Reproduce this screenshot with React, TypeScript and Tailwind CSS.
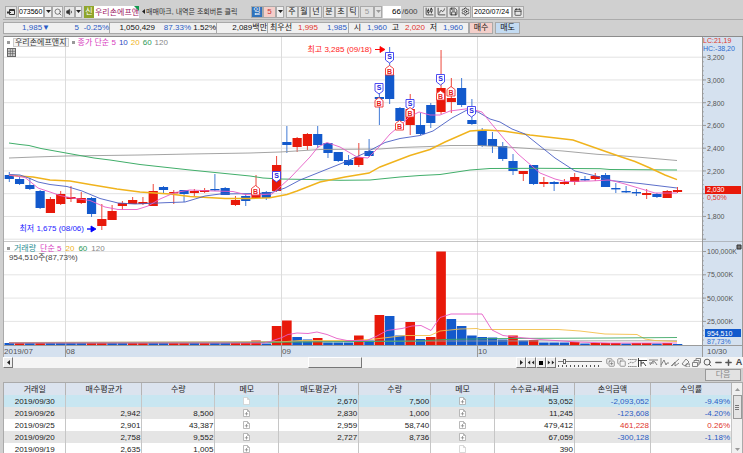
import React from 'react';
import {
  Calendar,
  ChartCandlestick,
  ChartSpline,
  Copy,
  CopyPlus,
  Minus,
  Plus,
  Save,
  Search,
  Settings,
  Volume1,
} from 'lucide-react';
import clsx from 'clsx';

const RED = '#e8190a';
const BLUE = '#1259cc';

// colour, high, body top, body bottom, low (chart units)
type Candle = [string, number, number, number, number];

const candles: Candle[] = [
  ['b', 172, 175, 179, 182],
  ['b', 177, 179, 184, 185],
  ['b', 178, 185, 189, 190],
  ['b', 190, 191, 208, 209],
  ['r', 197, 199, 213, 213],
  ['r', 191, 194, 204, 205],
  ['r', 186, 197, 199, 202],
  ['r', 192, 198, 203, 204],
  ['b', 197, 198, 214, 217],
  ['r', 204, 219, 226, 230],
  ['r', 205, 211, 220, 220],
  ['r', 201, 203, 206, 210],
  ['r', 197, 200, 204, 204],
  ['r', 197, 202, 204, 205],
  ['r', 184, 191, 206, 206],
  ['b', 186, 187, 190, 194],
  ['r', 190, 192, 193, 204],
  ['b', 190, 190, 194, 202],
  ['r', 189, 191, 193, 196],
  ['r', 188, 190, 192, 193],
  ['b', 174, 189, 190, 191],
  ['b', 187, 188, 195, 195],
  ['r', 196, 200, 205, 206],
  ['b', 194, 196, 201, 206],
  ['r', 175, 193, 198, 198],
  ['b', 191, 192, 198, 200],
  ['r', 156, 165, 191, 192],
  ['b', 126, 142, 145, 153],
  ['r', 137, 138, 147, 152],
  ['r', 133, 134, 146, 150],
  ['b', 126, 134, 145, 148],
  ['b', 143, 143, 153, 158],
  ['b', 152, 152, 161, 162],
  ['b', 155, 160, 165, 166],
  ['r', 143, 157, 165, 167],
  ['b', 139, 151, 156, 157],
  ['b', 92, 97, 99, 125],
  ['b', 47, 75, 99, 104],
  ['b', 107, 108, 121, 122],
  ['r', 94, 109, 125, 135],
  ['b', 113, 125, 134, 135],
  ['b', 103, 105, 123, 128],
  ['r', 50, 88, 112, 114],
  ['r', 78, 98, 102, 113],
  ['b', 78, 88, 105, 107],
  ['b', 99, 120, 124, 125],
  ['b', 128, 130, 146, 147],
  ['b', 132, 139, 146, 153],
  ['b', 142, 146, 159, 161],
  ['b', 154, 161, 171, 175],
  ['r', 171, 171, 174, 181],
  ['b', 165, 165, 184, 185],
  ['r', 177, 182, 184, 187],
  ['b', 181, 182, 184, 191],
  ['r', 179, 182, 184, 185],
  ['r', 173, 177, 182, 185],
  ['b', 176, 179, 180, 181],
  ['r', 173, 176, 179, 181],
  ['b', 173, 175, 187, 187],
  ['b', 183, 188, 189, 193],
  ['b', 186, 191, 192, 193],
  ['b', 189, 192, 193, 196],
  ['r', 189, 193, 195, 199],
  ['b', 193, 194, 197, 198],
  ['r', 190, 191, 198, 198],
  ['r', 187, 190, 192, 193],
];

// one letter per bar, then the bar heights
const volumeColors = 'brbrbbbbrrbbrrbbrrbrbbrrrbrrbbrbbbrbrbbrbrrbbbbbbrbrbbbrbrrrbrrbrb';
const volumeHeights = [
  2, 2, 2, 2, 2, 2, 2, 2, 2, 2, 2, 2, 2, 2, 2, 2, 2, 2, 2, 2, 2, 2, 2, 2, 4.5, 1.5, 19, 24.5, 8, 5.5, 7, 2.5,
  2.5, 2.5, 9.5, 4.5, 30, 29, 9.5, 23, 6, 8, 93.5, 26, 19, 9.5, 8, 7.5, 5.5, 9.5, 4.5, 5, 2.5, 2.5, 2.5, 3, 1.5,
  2, 2, 2, 1.5, 2, 2, 1.5, 2, 1,
];

const priceLines = [
  {
    color: '#9a9a9a',
    width: 0.9,
    points:
      '9,158 35,157 66,156 140,155 190,154 250,153 280,152 320,149.5 380,149 400,147.5 430,146.5 450,145.5 480,145.5 517,147.7 537,149 563,151 597,154.3 620,155.7 640,157.3 677,160.5',
  },
  {
    color: '#41ae6a',
    width: 1,
    points:
      '9,143 20,144.5 29,145.5 41,148.5 66,153 94,158 110,160 140,164.5 190,170 225,173.5 250,176 263,178 280,179 310,179.5 340,180.3 370,180 400,177 420,175.5 440,174.5 470,170 490,168.5 540,168.3 600,168.7 610,169.5 677,170',
  },
  {
    color: '#f0b31c',
    width: 1.4,
    points:
      '9,175 18,176 33,177 50,180 70,181 90,184.5 117,189 140,192 170,194 190,196.5 225,198.5 250,198.5 270,197.7 287,194.5 297,191 320,182 345,177 369,173 380,167 410,155.5 430,149.5 445,142 470,131 485,130 503,131 530,135 573,140 600,149.5 620,156.5 635,161.5 650,168 665,175 677,179.7',
  },
  {
    color: '#4a5fc4',
    width: 0.9,
    points:
      '9,174.5 20,175 30,178.5 38,182 50,184.5 67,186.5 82,191 100,198.5 118,203 135,204 165,202.7 185,202 205,196 220,194 245,193.7 270,193 285,188 300,180 325,170 345,162 365,153 385,142.5 400,138.5 420,135.5 433,131 452,118 467,110 478,112 490,119 500,122 512,129 525,134 535,142 555,158 575,171 600,177 610,180.5 640,183.5 677,188',
  },
  {
    color: '#e65cc6',
    width: 0.9,
    points:
      '9,175 25,177.5 32,183 38,188 50,192 60,195.5 72,198 90,200.5 105,207 118,209.5 137,209.5 148,206 160,199 175,192.5 190,190 213,191 233,191.5 245,194.5 255,195 272,194 290,178 310,157 318,147 327,142.5 340,147 357,157 368,158 378,148 390,134 402,124 409,117 419,112 430,115 440,115 450,111 469,108.5 482,112 490,122 505,140 518,154 540,173 555,179 565,181.5 590,181 610,180 625,184 640,188.5 655,193 677,193',
  },
];

const volumeLines = [
  { color: '#9a9a9a', points: '9,342.6 445,341 677,340.8' },
  {
    color: '#f3bf4a',
    points:
      '9,342.5 280,342 300,340.5 355,340.5 375,339 405,335.5 430,335.5 440,331 460,329 477,328.5 480,329.5 558,329.5 580,331 605,334 637,334.5 645,339 655,340.5 677,341.5',
  },
  { color: '#3fa866', points: '9,343 220,342.8 420,341 445,339.5 500,338.5 610,338 677,337.5' },
  {
    color: '#e65cc6',
    points:
      '9,343 264,343 270,341.5 282,337.5 288,334.5 297,333 308,333.5 317,332 327,334.5 337,338.5 347,340.5 367,340.5 377,336 387,330.5 402,328.5 412,326 421,325.5 431,330.5 440,317.5 451,314 482,314 492,330 503,335.5 520,337.5 540,339.5 555,340.5 577,342 610,343 677,343',
  },
];

const priceTicks = ['3,200', '3,000', '2,800', '2,600', '2,400', '2,200', '', '1,800', ''];
const volumeTicks = ['100,000K', '75,000K', '50,000K', '25,000K'];
const monthLines = [65.5, 281.5, 477.5];

const sells = [[276.5, 176], [379, 88], [389.5, 57], [410, 104], [440.5, 79], [471.5, 111]];
const buys = [[255.5, 191], [379, 103], [389.5, 71], [399.5, 126], [410, 113], [440.5, 96], [451, 92]];

const rows = [
  { date: '2019/09/30', buy: '', buyQty: '', memo: 'empty', sell: '2,670', sellQty: '7,500', memo2: 'note', fee: '53,052', pnl: '-2,093,052', rate: '-9.49%' },
  { date: '2019/09/26', buy: '2,942', buyQty: '8,500', memo: 'note', sell: '2,830', sellQty: '1,000', memo2: 'note', fee: '11,245', pnl: '-123,608', rate: '-4.20%' },
  { date: '2019/09/25', buy: '2,901', buyQty: '43,387', memo: 'note', sell: '2,959', sellQty: '58,740', memo2: 'note', fee: '479,412', pnl: '461,228', rate: '0.26%' },
  { date: '2019/09/20', buy: '2,758', buyQty: '9,552', memo: 'note', sell: '2,727', sellQty: '8,736', memo2: 'note', fee: '67,059', pnl: '-300,128', rate: '-1.18%' },
  { date: '2019/09/19', buy: '2,635', buyQty: '1,005', memo: 'note', sell: '', sellQty: '', memo2: 'empty', fee: '390', pnl: '', rate: '' },
];

const barX = (i: number) => 9.3 + i * 10.28;

function ToolButton({ label, className, children }: { label?: string; className?: string; children: React.ReactNode }) {
  return (
    <button
      type="button"
      aria-label={label}
      className={clsx(
        'flex h-3 shrink-0 items-center justify-center border border-[#a9a9a9] leading-none',
        className ?? 'w-3 bg-[#e6e6e6] text-[#222]'
      )}
    >
      {children}
    </button>
  );
}

function Arrow({ dir = 'down', dim = false }: { dir?: 'down' | 'up' | 'left' | 'right'; dim?: boolean }) {
  const paths = { down: 'M0 1h5L2.5 4z', up: 'M0 4h5L2.5 1z', left: 'M4 0v5L1 2.5z', right: 'M1 0v5l3-2.5z' };
  return (
    <svg width="5" height="5" viewBox="0 0 5 5" fill={dim ? '#999' : '#222'}>
      <path d={paths[dir]} />
    </svg>
  );
}

function Toolbar() {
  return (
    <div className="flex h-5 shrink-0 items-center border-b border-[#ababab] pt-1 pl-[2px]">
      <ToolButton label="창" className="w-3 bg-[#e6e6e6] text-[#333]">
        <svg width="8" height="8" viewBox="0 0 8 8" fill="none" stroke="#333">
          <path d="M2.5 1.5h5v5h-5zM2 2.5h6M0 4.5h4M1.5 3L0 4.5 1.5 6" />
        </svg>
      </ToolButton>
      <input aria-label="종목코드" defaultValue="073560" className="ml-px h-3 w-[26px] border border-[#a9a9a9] bg-white text-[7px] text-black outline-none" />
      <ToolButton label="종목 목록" className="w-2 bg-[#efefef]"><Arrow /></ToolButton>
      <ToolButton label="검색" className="w-[11px] bg-[#efefef] text-[#444]"><Search size={8} /></ToolButton>
      <ToolButton label="소리" className="ml-px w-[11px] bg-[#e6e6e6] text-[#333]"><Volume1 size={8} fill="#333" /></ToolButton>
      <ToolButton label="소리 설정" className="w-[7px] bg-[#efefef]"><Arrow /></ToolButton>
      <span className="ml-[2px] flex h-3 w-[10px] shrink-0 items-center justify-center bg-[#8fa52c] text-white">신</span>
      <div className="relative h-3 w-[45px] shrink-0">
        <input aria-label="종목명" defaultValue="우리손에프앤지" className="block h-3 w-full bg-white pl-px text-[#a01763] outline-none" />
        <svg className="absolute top-0 right-0" width="5" height="5" viewBox="0 0 5 5"><path d="M0 0h5v5z" fill="#11994f" /></svg>
      </div>
      <div className="flex w-28 shrink-0 items-center pl-[2px] text-[7px] whitespace-nowrap text-[#333]">
        <Arrow dir="left" />매매마크, 내역은 조회버튼 클릭
      </div>
      <ToolButton className="w-3 bg-[#2f72bb] text-white">일</ToolButton>
      <ToolButton className="w-[13px] bg-[#f4cfca] text-[#c33]">5</ToolButton>
      <ToolButton label="주기" className="w-2 bg-[#efefef]"><Arrow /></ToolButton>
      <div className="ml-[2px] flex">
        {['주', '월', '년'].map((t) => <ToolButton key={t}>{t}</ToolButton>)}
      </div>
      <div className="ml-px flex">
        {['분', '초', '틱'].map((t) => <ToolButton key={t}>{t}</ToolButton>)}
      </div>
      <ToolButton className="ml-px w-[14px] bg-[#e2e2e2] text-[#999]">5</ToolButton>
      <ToolButton label="분 단위" className="w-2 bg-[#e2e2e2]"><Arrow dim /></ToolButton>
      <input aria-label="봉 개수" defaultValue="66" className="ml-px h-3 w-[18px] bg-white text-right text-black outline-none" />
      <span className="w-[22px] shrink-0 pl-px text-[#444]">/600</span>
      <ToolButton label="봉 추가"><ChartCandlestick size={9} /></ToolButton>
      <ToolButton label="지표 추가"><ChartSpline size={9} /></ToolButton>
      <ToolButton label="저장"><Save size={9} /></ToolButton>
      <ToolButton label="설정"><Settings size={9} /></ToolButton>
      <input aria-label="날짜" defaultValue="2020/07/24" className="ml-px h-3 w-10 border border-[#a9a9a9] bg-white pl-px text-[7px] text-black outline-none" />
      <ToolButton label="달력"><Calendar size={8} /></ToolButton>
    </div>
  );
}

function QuoteBar() {
  return (
    <div className="flex h-4 shrink-0 items-center text-[#111]">
      <div className="flex h-3 items-center border border-[#a9a9a9] bg-[#f0f0f0] text-right leading-[10px]">
        <div className="flex h-full w-[106px] border-r border-[#a9a9a9] text-[#2a5bc4]">
          <span className="w-[46px]">1,985▼</span>
          <span className="w-[29px]">5</span>
          <span className="w-[30px]">-0.25%</span>
        </div>
        <div className="flex h-full w-[107px] border-r border-[#a9a9a9]">
          <span className="w-[45px]">1,050,429</span>
          <span className="w-9 text-[#2a5bc4]">87.33%</span>
          <span className="w-[25px]">1.52%</span>
        </div>
        <div className="h-full w-[51px] border-r border-[#a9a9a9]">2,089백만</div>
        <span className="w-6">최우선</span>
        <span className="w-[26px] text-[#e0352b]">1,995</span>
        <span className="w-[31px] border-r border-[#a9a9a9] pr-px text-[#2a5bc4]">1,985</span>
        <span className="w-3">시</span>
        <span className="w-[26px] text-[#2a5bc4]">1,960</span>
        <span className="w-3">고</span>
        <span className="w-[26px] text-[#e0352b]">2,020</span>
        <span className="w-3">저</span>
        <span className="w-[31px] pr-[5px] text-[#2a5bc4]">1,960</span>
      </div>
      <ToolButton className="w-6 bg-[#f4cfca] text-[#111]">매수</ToolButton>
      <ToolButton className="ml-[2px] w-[25px] bg-[#c3dbf2] text-[#111]">매도</ToolButton>
    </div>
  );
}

function PriceChart() {
  return (
    <div className="relative shrink-0">
      <svg viewBox="3 36 740 206" className="block h-auto w-full" role="img" aria-label="주가 차트">
        <rect x="3" y="36" width="740" height="206" fill="#fff" />
        <rect x="702" y="36" width="41" height="206" fill="#d5e1ef" />
        {priceTicks.map((_, i) => (
          <path key={i} d={`M3 ${57.2 + i * 22.75}H702`} stroke="#e2e2e2" />
        ))}
        {monthLines.map((x) => <path key={x} d={`M${x} 36V242`} stroke="#dcdcdc" />)}
        {candles.map(([c, high, top, bottom, low], i) => {
          const color = c === 'r' ? RED : BLUE;
          return (
            <g key={i}>
              <path d={`M${barX(i)} ${high}V${low}`} stroke={color} strokeWidth="0.8" />
              <rect x={barX(i) - 4.6} y={top} width="9.2" height={Math.max(bottom - top, 1.4)} fill={color} />
            </g>
          );
        })}
        {priceLines.map((l) => (
          <polyline key={l.color} points={l.points} fill="none" stroke={l.color} strokeWidth={l.width} />
        ))}
        {sells.map(([x, y]) => (
          <g key={`${x}-${y}`}>
            <path d={`M${x - 4} ${y - 4.5}h8v7.5l-4 3-4-3z`} fill="#fff" stroke="#3a3af0" strokeWidth="0.9" />
            <text x={x} y={y + 2} fontSize="7" fontWeight="bold" textAnchor="middle" fill="#2626e0">S</text>
          </g>
        ))}
        {buys.map(([x, y]) => (
          <g key={`${x}-${y}`}>
            <path d={`M${x - 4} ${y + 4}h8v-6.5l-4-3-4 3z`} fill="#fff" stroke="#f03030" strokeWidth="0.9" />
            <text x={x} y={y + 3} fontSize="7" fontWeight="bold" textAnchor="middle" fill="#e81c1c">B</text>
          </g>
        ))}
        <text x="372" y="52" fontSize="8" textAnchor="end" fill="#f22">최고 3,285 (09/18)</text>
        <path d="M375 49.5h5v-3l5 3-5 3v-3z" fill="#f00" stroke="#f00" strokeWidth="0.8" />
        <text x="84" y="231" fontSize="8" textAnchor="end" fill="#22f">최저 1,675 (08/06)</text>
        <path d="M87 229h4v-3l5 3-5 3v-3z" fill="#00f" stroke="#00f" strokeWidth="0.8" />

        <path d="M702.5 36V242M742.5 36V242" stroke="#9b9b9b" />
        {Array.from({ length: 40 }, (_, i) => (
          <path key={i} d={`M702 ${57.2 + i * 4.55}h2`} stroke="#999" strokeWidth="0.7" />
        ))}
        <g fontSize="7" fill="#555">
          {priceTicks.map((t, i) => (
            <g key={i}>
              <path d={`M702 ${57.2 + i * 22.75}h4`} stroke="#999" />
              <text x="707" y={60 + i * 22.75}>{t}</text>
            </g>
          ))}
          <text x="703" y="43" fill="#e0352b">LC:21,19</text>
          <text x="703" y="51" fill="#2a6bd0">HC:-38,20</text>
          <rect x="705" y="186" width="36" height="8" fill="#e8190a" />
          <text x="707" y="192" fill="#fff">2,030</text>
          <text x="707" y="200" fill="#e0352b">0,50%</text>
        </g>
        <path d="M3 36.5H743M3 242H743" stroke="#8c8c8c" />
        <path d="M3.5 36V242" stroke="#aaa" />
      </svg>
      <div className="absolute top-[2px] left-1 flex items-center gap-[3px] leading-[9px]">
        <i className="size-[3px] bg-[#999]" />
        <span className="border border-[#ccc] bg-[#f4f4f4] px-px leading-[7px] text-[#333]">우리손에프앤지</span>
        <i className="size-[3px] bg-[#999]" />
        <span className="text-[#d83cc0]">종가 단순 5</span>
        <span className="text-[#2f49c0]">10</span>
        <span className="text-[#f0b31c]">20</span>
        <span className="text-[#2d9a55]">60</span>
        <span className="text-[#888]">120</span>
      </div>
      <button type="button" aria-label="표 보기" className="absolute top-3 left-1 flex size-[9px] items-center justify-center border border-[#666] bg-[#ccc]">
        <svg width="7" height="7" viewBox="0 0 7 7" stroke="#555" strokeWidth="0.6"><path d="M0 2.3h7M0 4.6h7M2.3 0v7M4.6 0v7" /></svg>
      </button>
    </div>
  );
}

function VolumeChart() {
  return (
    <div className="relative shrink-0">
      <svg viewBox="3 242 740 115" className="block h-auto w-full" role="img" aria-label="거래량 차트">
        <rect x="3" y="242" width="740" height="115" fill="#fff" />
        <rect x="702" y="242" width="41" height="115" fill="#d5e1ef" />
        <rect x="3" y="345" width="740" height="12" fill="#d5e1ef" />
        {volumeTicks.map((t, i) => <path key={t} d={`M3 ${251.5 + i * 23.3}H702`} stroke="#e4e4e4" />)}
        {monthLines.map((x) => <path key={x} d={`M${x} 242V345`} stroke="#dcdcdc" />)}
        {volumeHeights.map((h, i) => (
          <rect key={i} x={barX(i) - 4.8} y={345 - h} width="9.6" height={h} fill={volumeColors[i] === 'r' ? RED : BLUE} />
        ))}
        {volumeLines.map((l) => (
          <polyline key={l.color} points={l.points} fill="none" stroke={l.color} strokeWidth="0.9" />
        ))}
        <path d="M702.5 242V357M742.5 242V357M3 345.5H743" stroke="#9b9b9b" />
        {monthLines.map((x) => <path key={x} d={`M${x} 345V357`} stroke="#999" />)}
        {Array.from({ length: 20 }, (_, i) => (
          <path key={i} d={`M702 ${251.5 + i * 4.66}h2`} stroke="#999" strokeWidth="0.7" />
        ))}
        <g fontSize="7" fill="#555">
          {volumeTicks.map((t, i) => (
            <g key={t}>
              <path d={`M702 ${251.5 + i * 23.3}h4`} stroke="#999" />
              <text x="707" y={254 + i * 23.3}>{t}</text>
            </g>
          ))}
          <rect x="705" y="329" width="36" height="8" fill="#1259cc" />
          <text x="707" y="335.5" fill="#fff">954,510</text>
          <text x="707" y="344" fill="#2a6bd0">87,73%</text>
        </g>
        <g fontSize="8" fill="#555">
          <text x="4" y="354">2019/07</text>
          <text x="66" y="354">08</text>
          <text x="282" y="354">09</text>
          <text x="478" y="354">10</text>
          <text x="707" y="354">10/30</text>
        </g>
        <path d="M737 245h4v4h-4z" fill="#777" stroke="#333" />
        <path d="M3.5 242V357" stroke="#aaa" />
      </svg>
      <div className="absolute top-[2px] left-1 leading-[9px]">
        <div className="flex items-center gap-1">
          <i className="size-[3px] bg-[#999]" />
          <span className="text-[#2b8f94]">거래량</span>
          <span className="text-[#d83cc0]">단순 5</span>
          <span className="text-[#f0b31c]">20</span>
          <span className="text-[#2d9a55]">60</span>
          <span className="text-[#888]">120</span>
        </div>
        <div className="pl-[2px] text-[#444]">954,510주(87,73%)</div>
      </div>
    </div>
  );
}

const navButton = 'flex h-[11px] w-[10px] shrink-0 items-center justify-center border border-[#777] border-t-white border-l-white bg-[#eee]';

const glyph = { width: 9, height: 9, viewBox: '0 0 9 9', fill: 'none', stroke: 'currentColor', strokeWidth: 0.9 };

function ScrollStrip() {
  return (
    <div className="flex h-[11px] shrink-0 items-center bg-[#f5f5f5]">
      <button type="button" aria-label="왼쪽으로" className={navButton}><Arrow dir="left" /></button>
      <div className="flex h-full flex-1">
        <div className="flex-[294]" />
        <div className="h-full w-[54px] border border-[#777] border-t-white border-l-white bg-[#ececec]" />
        <div className="flex-[153]" />
      </div>
      <button type="button" aria-label="오른쪽으로" className={navButton}><Arrow dir="right" /></button>
      <button type="button" aria-label="되감기" className={navButton}><Arrow dir="left" /><Arrow dir="left" /></button>
      <button type="button" aria-label="정지" className={navButton}><i className="size-1 bg-black" /></button>
      <button type="button" aria-label="빨리 감기" className={navButton}><Arrow dir="right" /><Arrow dir="right" /></button>
      <div className="ml-[2px] w-11 shrink-0">
        <input
          type="range"
          aria-label="재생 속도"
          defaultValue={12}
          className="block h-[6px] w-full appearance-none bg-[linear-gradient(#777,#777)] bg-[length:100%_1px] bg-center bg-no-repeat [&::-webkit-slider-thumb]:h-[5px] [&::-webkit-slider-thumb]:w-[3px] [&::-webkit-slider-thumb]:appearance-none [&::-webkit-slider-thumb]:border [&::-webkit-slider-thumb]:border-[#666] [&::-webkit-slider-thumb]:bg-white"
        />
        <div className="h-[2px] w-full bg-[repeating-linear-gradient(90deg,#555_0_1px,transparent_1px_4px)]" />
      </div>
      <div className="ml-1 flex w-[137px] shrink-0 items-center justify-between text-[#777]">
        <CopyPlus size={9} />
        <Copy size={9} />
        <svg {...glyph}><path d="M0 1.5h9M0 8.5h9M0 6l3-2 2 1 4-3" strokeDasharray="1.5 0.6" /></svg>
        <svg {...glyph} className="bg-white text-[#222]"><path d="M.5 0v9M0 2.5h9M3 2.5v6M3 5h2M5 4l3 4" /></svg>
        <svg {...glyph}><path d="M0 2h9M1 7l3-4 2 1 2 3M0 5h5" /></svg>
        <svg {...glyph}><path d="M1 0v9M1 7l3-5 2 5 1-2h2" /></svg>
        <svg {...glyph}><path d="M0 8l8-7M1 8l3-4v4l4-3" /></svg>
        <svg {...glyph}><path d="M1 6l4-5 3 3-4 4zM5 6h4v3H5z" /></svg>
        <svg {...glyph}><path d="M.5 4.5h5v4h-5zM2 4V2.5h5V7H6M4 2V.5h4.500V5H7" /></svg>
        <Search size={9} strokeWidth={2.5} className="text-[#555]" />
        <Minus size={9} strokeWidth={4} className="text-[#555]" />
        <Plus size={9} strokeWidth={4} className="text-[#555]" />
        <b className="w-2 text-center text-[9px] leading-none text-[#444]">A</b>
      </div>
    </div>
  );
}

function Memo({ kind }: { kind: string }) {
  const empty = kind === 'empty';
  return (
    <svg className="mx-auto block" width="7" height="8" viewBox="0 0 7 8" fill="#fff" stroke={empty ? '#cfcfcf' : '#a8a8a8'} strokeWidth="0.8">
      <path d="M.5.5h4l2 2v5h-6zM4.500.5v2h2" />
      {!empty && <path d="M3.500 3v3.500M1.800 4.800h3.400" stroke="#808080" strokeWidth="0.7" />}
    </svg>
  );
}

const columns = [
  ['거래일', 'w-[62px]'],
  ['매수평균가', 'w-[76px]'],
  ['수량', 'w-[73px]'],
  ['메모', 'w-[64px]'],
  ['매도평균가', 'w-[80px]'],
  ['수량', 'w-[72px]'],
  ['메모', 'w-[64px]'],
  ['수수료+제세금', 'w-[80px]'],
  ['손익금액', 'w-[76px]'],
  ['수익률', 'w-[81px]'],
];

function tone(v: string) {
  return v.startsWith('-') ? 'text-[#2a5bc4]' : 'text-[#e0352b]';
}

function TradeTable() {
  const cell = 'h-3 border-r border-[#c6c6c6] p-0 pr-px text-right';
  return (
    <div className="flex h-0 min-h-[70px] flex-1 overflow-hidden border-l border-[#aaa] bg-white">
      <table className="h-fit flex-1 table-fixed border-collapse leading-[11px] text-[#222]">
        <thead>
          <tr className="bg-[#dbe3ee]">
            {columns.map(([name, width], i) => (
              <th key={i} scope="col" className={clsx('h-3 border-r border-[#b4b4b4] p-0 text-center font-normal', width)}>{name}</th>
            ))}
          </tr>
        </thead>
        <tbody>
          {rows.map((r, i) => (
            <tr key={r.date} className={i === 0 ? 'bg-[#c8e6f1]' : i % 2 ? 'bg-[#e5e5e5]' : 'bg-white'}>
              <td className="h-3 border-r border-[#c6c6c6] p-0 text-center">{r.date}</td>
              <td className={cell}>{r.buy}</td>
              <td className={cell}>{r.buyQty}</td>
              <td className={cell}><Memo kind={r.memo} /></td>
              <td className={cell}>{r.sell}</td>
              <td className={cell}>{r.sellQty}</td>
              <td className={cell}><Memo kind={r.memo2} /></td>
              <td className={cell}>{r.fee}</td>
              <td className={clsx(cell, tone(r.pnl))}>{r.pnl}</td>
              <td className={clsx(cell, tone(r.rate))}>{r.rate}</td>
            </tr>
          ))}
        </tbody>
      </table>
      <div className="flex w-[11px] shrink-0 flex-col items-center justify-between border-r border-[#aaa] bg-[#f0f0f0]">
        <button type="button" aria-label="위로" className="flex h-3 items-center"><Arrow dir="up" dim /></button>
        <div className="mb-auto flex h-6 w-[9px] flex-col items-center justify-center gap-px border border-[#999] bg-[#e4e4e4]">
          <i className="h-px w-1 bg-[#777]" />
          <i className="h-px w-1 bg-[#777]" />
          <i className="h-px w-1 bg-[#777]" />
        </div>
        <button type="button" aria-label="아래로" className="flex h-3 items-center"><Arrow dim /></button>
      </div>
    </div>
  );
}

export default function App() {
  return (
    <div className="flex min-h-screen flex-col bg-[#d0d0d0] pl-[3px] font-['Liberation_Sans','Noto_Sans_CJK_KR',sans-serif] text-[8px] leading-[10px]">
      <Toolbar />
      <QuoteBar />
      <PriceChart />
      <VolumeChart />
      <ScrollStrip />
      <div className="flex h-[15px] shrink-0 items-center justify-end border-b border-[#aaa] pr-[2px]">
        <button type="button" className="h-3 w-9 border border-[#999] bg-[#e2e2e2] leading-none text-[#888]">다음</button>
      </div>
      <TradeTable />
    </div>
  );
}
